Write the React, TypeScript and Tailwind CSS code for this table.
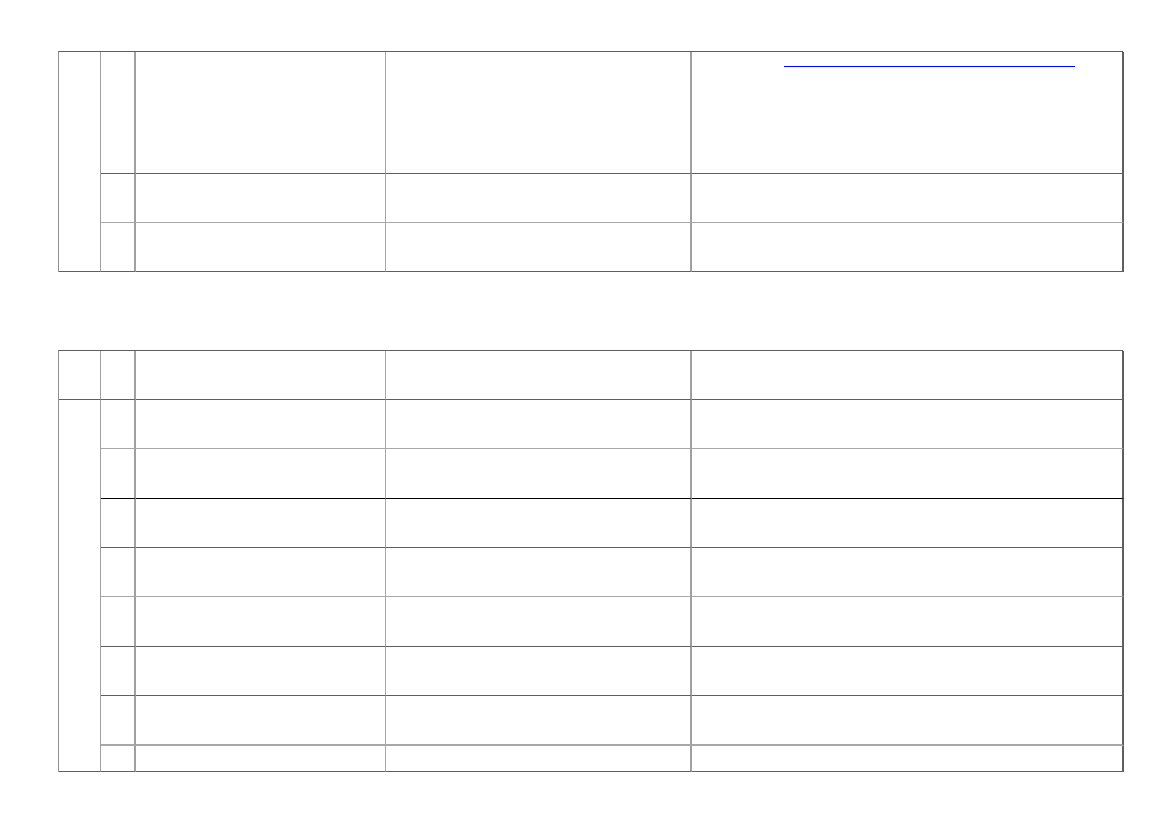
import React from 'react';

// two empty bordered tables, borders in mixed greys as in a printed form
const dark = 'border-[#5f5f5f]';

export default function App() {
  return (
    <div className="min-h-[827px] w-[1169px] bg-white font-['Liberation_Sans',sans-serif]">
      <div className="flex flex-col pl-[58px] pt-[51px]">
        {/* table one */}
        <div className="grid w-[1065px] grid-cols-[42px_35px_250px_306px_432px] grid-rows-[122px_49px_49px] border-t border-l border-t-[#5f5f5f] border-l-[#909090]">
          <div className="row-span-3 border-r border-b border-r-[#a0a0a0] border-b-[#5f5f5f]" />
          <div className="border-r-2 border-b border-r-[#a0a0a0] border-b-[#5f5f5f]" />
          <div className="border-r border-b border-r-[#a8a8a8] border-b-[#5f5f5f]" />
          <div className="border-r-2 border-b border-r-[#a0a0a0] border-b-[#5f5f5f]" />
          <div className={`border-r-2 border-b ${dark}`}>
            <div className="ml-[92px] mt-[14px] h-px w-[291px] bg-[#0000ff]" />
          </div>

          <div className="border-r-2 border-b border-r-[#a0a0a0] border-b-[#a8a8a8]" />
          <div className="border-r border-b border-r-[#a8a8a8] border-b-[#a8a8a8]" />
          <div className="border-r-2 border-b border-r-[#a0a0a0] border-b-[#a8a8a8]" />
          <div className="border-r-2 border-b border-r-[#5f5f5f] border-b-[#a8a8a8]" />

          <div className="border-r-2 border-b border-r-[#a0a0a0] border-b-[#5f5f5f]" />
          <div className="border-r border-b border-r-[#a8a8a8] border-b-[#5f5f5f]" />
          <div className="border-r-2 border-b border-r-[#a0a0a0] border-b-[#5f5f5f]" />
          <div className={`border-r-2 border-b ${dark}`} />
        </div>

        {/* table two */}
        <div className="mt-[78px] grid w-[1065px] grid-cols-[42px_35px_250px_306px_432px] grid-rows-[49px_49px_50px_49px_49px_50px_49px_50px_26px] border-t border-l border-t-[#5f5f5f] border-l-[#909090]">
          <div className="border-r border-b border-r-[#a0a0a0] border-b-[#5f5f5f]" />
          <div className="border-r-2 border-b border-r-[#a0a0a0] border-b-[#5f5f5f]" />
          <div className="border-r border-b border-r-[#a8a8a8] border-b-[#5f5f5f]" />
          <div className="border-r-2 border-b border-r-[#a0a0a0] border-b-[#5f5f5f]" />
          <div className={`border-r-2 border-b ${dark}`} />

          <div className="row-span-8 border-r border-b border-r-[#a0a0a0] border-b-[#5f5f5f]" />

          {/* 448 light */}
          <div className="border-r-2 border-b border-r-[#a0a0a0] border-b-[#a8a8a8]" />
          <div className="border-r border-b border-r-[#a8a8a8] border-b-[#a8a8a8]" />
          <div className="border-r-2 border-b border-r-[#a0a0a0] border-b-[#a8a8a8]" />
          <div className="border-r-2 border-b border-r-[#5f5f5f] border-b-[#a8a8a8]" />

          {/* 498 black */}
          <div className="border-r-2 border-b border-r-[#a0a0a0] border-b-black" />
          <div className="border-r border-b border-r-[#a8a8a8] border-b-black" />
          <div className="border-r-2 border-b border-r-[#a0a0a0] border-b-black" />
          <div className="border-r-2 border-b border-r-[#5f5f5f] border-b-black" />

          {/* 547 dark */}
          <div className="border-r-2 border-b border-r-[#a0a0a0] border-b-[#5f5f5f]" />
          <div className="border-r border-b border-r-[#a8a8a8] border-b-[#5f5f5f]" />
          <div className="border-r-2 border-b border-r-[#a0a0a0] border-b-[#5f5f5f]" />
          <div className={`border-r-2 border-b ${dark}`} />

          {/* 596 light */}
          <div className="border-r-2 border-b border-r-[#a0a0a0] border-b-[#a8a8a8]" />
          <div className="border-r border-b border-r-[#a8a8a8] border-b-[#a8a8a8]" />
          <div className="border-r-2 border-b border-r-[#a0a0a0] border-b-[#a8a8a8]" />
          <div className="border-r-2 border-b border-r-[#5f5f5f] border-b-[#a8a8a8]" />

          {/* 646 dark */}
          <div className="border-r-2 border-b border-r-[#a0a0a0] border-b-[#5f5f5f]" />
          <div className="border-r border-b border-r-[#a8a8a8] border-b-[#5f5f5f]" />
          <div className="border-r-2 border-b border-r-[#a0a0a0] border-b-[#5f5f5f]" />
          <div className={`border-r-2 border-b ${dark}`} />

          {/* 695 dark */}
          <div className="border-r-2 border-b border-r-[#a0a0a0] border-b-[#5f5f5f]" />
          <div className="border-r border-b border-r-[#a8a8a8] border-b-[#5f5f5f]" />
          <div className="border-r-2 border-b border-r-[#a0a0a0] border-b-[#5f5f5f]" />
          <div className={`border-r-2 border-b ${dark}`} />

          {/* 745 light, thicker */}
          <div className="border-r-2 border-b-2 border-r-[#a0a0a0] border-b-[#a8a8a8]" />
          <div className="border-r border-b-2 border-r-[#a8a8a8] border-b-[#a8a8a8]" />
          <div className="border-r-2 border-b-2 border-r-[#a0a0a0] border-b-[#a8a8a8]" />
          <div className="border-r-2 border-b-2 border-r-[#5f5f5f] border-b-[#a8a8a8]" />

          {/* last short row */}
          <div className="border-r-2 border-b border-r-[#a0a0a0] border-b-[#5f5f5f]" />
          <div className="border-r border-b border-r-[#a8a8a8] border-b-[#5f5f5f]" />
          <div className="border-r-2 border-b border-r-[#a0a0a0] border-b-[#5f5f5f]" />
          <div className={`border-r-2 border-b ${dark}`} />
        </div>
      </div>
    </div>
  );
}
